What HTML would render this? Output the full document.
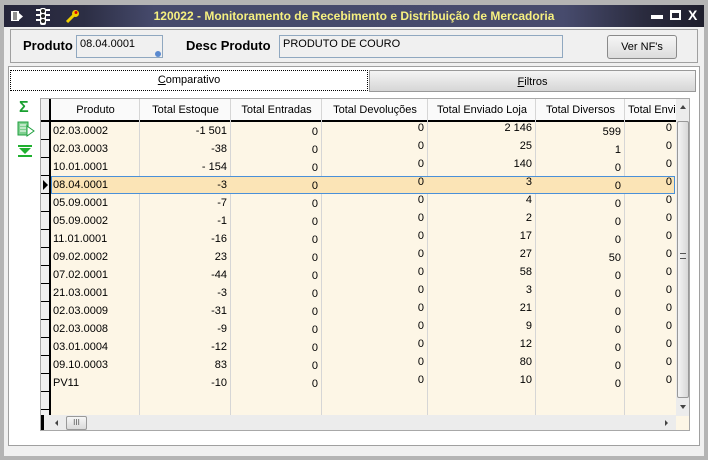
<!DOCTYPE html>
<html><head><meta charset="utf-8"><style>
*{margin:0;padding:0;box-sizing:border-box}
body{width:708px;height:460px;background:#b4b4b4;font-family:"Liberation Sans",sans-serif;font-size:11px;color:#000;position:relative;overflow:hidden}
.abs{position:absolute}
#win{left:4px;top:5px;width:700px;height:451px;background:#f0f0f0}
#title{left:4px;top:5px;width:700px;height:22px;background:linear-gradient(90deg,#25253a 0,#2c2e44 80px,#464a6c 150px,#474b6d 560px,#2a2b3e 640px,#1e1e2c 700px)}
#title .t{left:0;width:700px;top:4px;text-align:center;color:#f6f080;font-weight:bold;font-size:12px}
.tb{color:#fff;font-weight:bold;font-size:13px;top:2px}
#top{left:10px;top:29px;width:688px;height:34px;border:1px solid #a0a0a0;background:#f0f0f0}
.lbl{font-weight:bold;font-size:13px}
.inp{border:1px solid #90a8c0;background:#f0f0f0;font-size:11px;padding:2px 3px}
#btn{left:607px;top:35px;width:70px;height:24px;border:1px solid #8a8a8a;border-radius:3px;background:linear-gradient(#f6f6f6,#dcdcdc);text-align:center;line-height:22px}
#pane{left:8px;top:66px;width:692px;height:380px;background:#fff;border:1px solid #a0a0a0}
#tab1{left:10px;top:70px;width:358px;height:21px;border:1px dotted #000;text-align:center;line-height:18px;background:#fff}
#tab2{left:369px;top:70px;width:327px;height:22px;border:1px solid #999;background:linear-gradient(#f4f4f4,#d6d6d6);text-align:center;line-height:22px}
#grid{left:40px;top:98px;width:650px;height:333px;background:#fdf6e6;border:1px solid #a8a8a8;overflow:hidden}
.hdr{top:0;height:23px;background:#fafafa;border-bottom:2px solid #000;line-height:22px;text-align:center;white-space:nowrap;overflow:hidden}
.vl{top:0;width:1px;background:#d6d6d6}
.cell{height:18px;line-height:18px;text-align:right;padding-right:4px;white-space:nowrap}
</style></head><body>
<div class="abs" id="win"></div>
<div class="abs" id="title">
 <div class="abs t">120022 - Monitoramento de Recebimento e Distribuição de Mercadoria</div>
 <svg class="abs" style="left:6px;top:5px" width="14" height="13"><rect x="1" y="1" width="8" height="10" fill="#fff"/><path d="M3 3h4M3 5h4M3 7h4M3 9h4" stroke="#222"/><path d="M9 3l4 3.5-4 3.5z" fill="#fff"/></svg>
 <svg class="abs" style="left:32px;top:3px" width="14" height="17"><rect x="4" y="0" width="6" height="17" rx="2" fill="#fff"/><circle cx="7" cy="3" r="2" fill="#222"/><circle cx="7" cy="8" r="2" fill="#222"/><circle cx="7" cy="13" r="2" fill="#222"/><path d="M0 2h4M0 7h4M0 12h4M10 2h4M10 7h4M10 12h4" stroke="#fff" stroke-width="2"/></svg>
 <svg class="abs" style="left:61px;top:3px" width="16" height="16"><path d="M2 14l7-7" stroke="#f0d000" stroke-width="3"/><circle cx="10.5" cy="5.5" r="3.5" fill="#f0d000"/><circle cx="11" cy="4.5" r="1.5" fill="#d00"/></svg>
 <div class="abs" style="left:647px;top:10px;width:12px;height:4px;background:#fff"></div>
 <div class="abs" style="left:666px;top:5px;width:11px;height:10px;border:2px solid #fff;border-top-width:3px"></div>
 <div class="abs tb" style="left:684px;top:2px;font-size:14px">X</div>
</div>
<div class="abs" id="top"></div>
<div class="abs lbl" style="left:23px;top:38px">Produto</div>
<div class="abs inp" style="left:76px;top:35px;width:87px;height:23px">08.04.0001</div>
<div class="abs" style="left:155px;top:51px;width:6px;height:6px;border-radius:50%;background:#5a8ad0"></div>
<div class="abs lbl" style="left:186px;top:38px">Desc Produto</div>
<div class="abs inp" style="left:279px;top:35px;width:284px;height:23px">PRODUTO DE COURO</div>
<div class="abs" id="btn">Ver NF's</div>
<div class="abs" id="pane"></div>
<div class="abs" id="tab2"><u>F</u>iltros</div>
<div class="abs" id="tab1"><u>C</u>omparativo</div>
<div class="abs" style="left:19px;top:99px;color:#19a030;font-size:16px;font-weight:bold">Σ</div>
<svg class="abs" style="left:17px;top:121px" width="18" height="16"><rect x="1" y="1" width="10" height="13" fill="#7fd090" stroke="#20a040"/><path d="M3 4h6M3 7h6M3 10h6" stroke="#fff"/><path d="M10 5l7 5-7 5z" fill="#fff" stroke="#20a040"/></svg>
<svg class="abs" style="left:17px;top:144px" width="16" height="14"><rect x="1" y="1" width="14" height="2" fill="#20b030"/><path d="M2 4h12l-6 6z" fill="#20b030"/><rect x="1" y="11" width="14" height="2" fill="#20b030"/></svg>
<div class="abs" id="grid">
<div class="abs hdr" style="left:0;width:10px;background:#f0f0f0;border-right:2px solid #000"></div>
<div class="abs hdr" style="left:10px;width:89px">Produto</div>
<div class="abs hdr" style="left:99px;width:91px">Total Estoque</div>
<div class="abs hdr" style="left:190px;width:91px">Total Entradas</div>
<div class="abs hdr" style="left:281px;width:106px">Total Devoluções</div>
<div class="abs hdr" style="left:387px;width:108px">Total Enviado Loja</div>
<div class="abs hdr" style="left:495px;width:89px">Total Diversos</div>
<div class="abs hdr" style="left:584px;width:51px;text-align:left;padding-left:3px">Total Envi</div>
<div class="abs" style="left:0;top:23px;width:10px;height:294px;background:#f0f0f0;border-right:2px solid #000;background-image:repeating-linear-gradient(#f0f0f0 0,#f0f0f0 17px,#000 17px,#000 18px)"></div>
<div class="abs vl" style="left:98px;height:317px"></div>
<div class="abs vl" style="left:189px;height:317px"></div>
<div class="abs vl" style="left:280px;height:317px"></div>
<div class="abs vl" style="left:386px;height:317px"></div>
<div class="abs vl" style="left:494px;height:317px"></div>
<div class="abs vl" style="left:583px;height:317px"></div>
<div class="abs" style="left:10px;top:77px;width:624px;height:18px;background:#fbe4b6;border:1px solid #4a90d8"></div>
<div class="abs" style="left:2px;top:81px;width:0;height:0;border-left:5px solid #000;border-top:5px solid transparent;border-bottom:5px solid transparent"></div>
<div class="abs" style="left:12px;top:23px;width:86px">
<div class="cell" style="text-align:left">02.03.0002</div><div class="cell" style="text-align:left">02.03.0003</div><div class="cell" style="text-align:left">10.01.0001</div><div class="cell" style="text-align:left">08.04.0001</div><div class="cell" style="text-align:left">05.09.0001</div><div class="cell" style="text-align:left">05.09.0002</div><div class="cell" style="text-align:left">11.01.0001</div><div class="cell" style="text-align:left">09.02.0002</div><div class="cell" style="text-align:left">07.02.0001</div><div class="cell" style="text-align:left">21.03.0001</div><div class="cell" style="text-align:left">02.03.0009</div><div class="cell" style="text-align:left">02.03.0008</div><div class="cell" style="text-align:left">03.01.0004</div><div class="cell" style="text-align:left">09.10.0003</div><div class="cell" style="text-align:left">PV11</div></div>
<div class="abs" style="left:99px;top:23px;width:91px">
<div class="cell">-1 501</div><div class="cell">-38</div><div class="cell">- 154</div><div class="cell">-3</div><div class="cell">-7</div><div class="cell">-1</div><div class="cell">-16</div><div class="cell">23</div><div class="cell">-44</div><div class="cell">-3</div><div class="cell">-31</div><div class="cell">-9</div><div class="cell">-12</div><div class="cell">83</div><div class="cell">-10</div></div>
<div class="abs" style="left:190px;top:24px;width:91px">
<div class="cell">0</div><div class="cell">0</div><div class="cell">0</div><div class="cell">0</div><div class="cell">0</div><div class="cell">0</div><div class="cell">0</div><div class="cell">0</div><div class="cell">0</div><div class="cell">0</div><div class="cell">0</div><div class="cell">0</div><div class="cell">0</div><div class="cell">0</div><div class="cell">0</div></div>
<div class="abs" style="left:281px;top:20px;width:106px">
<div class="cell">0</div><div class="cell">0</div><div class="cell">0</div><div class="cell">0</div><div class="cell">0</div><div class="cell">0</div><div class="cell">0</div><div class="cell">0</div><div class="cell">0</div><div class="cell">0</div><div class="cell">0</div><div class="cell">0</div><div class="cell">0</div><div class="cell">0</div><div class="cell">0</div></div>
<div class="abs" style="left:387px;top:20px;width:108px">
<div class="cell">2 146</div><div class="cell">25</div><div class="cell">140</div><div class="cell">3</div><div class="cell">4</div><div class="cell">2</div><div class="cell">17</div><div class="cell">27</div><div class="cell">58</div><div class="cell">3</div><div class="cell">21</div><div class="cell">9</div><div class="cell">12</div><div class="cell">80</div><div class="cell">10</div></div>
<div class="abs" style="left:495px;top:24px;width:89px">
<div class="cell">599</div><div class="cell">1</div><div class="cell">0</div><div class="cell">0</div><div class="cell">0</div><div class="cell">0</div><div class="cell">0</div><div class="cell">50</div><div class="cell">0</div><div class="cell">0</div><div class="cell">0</div><div class="cell">0</div><div class="cell">0</div><div class="cell">0</div><div class="cell">0</div></div>
<div class="abs" style="left:584px;top:20px;width:51px">
<div class="cell">0</div><div class="cell">0</div><div class="cell">0</div><div class="cell">0</div><div class="cell">0</div><div class="cell">0</div><div class="cell">0</div><div class="cell">0</div><div class="cell">0</div><div class="cell">0</div><div class="cell">0</div><div class="cell">0</div><div class="cell">0</div><div class="cell">0</div><div class="cell">0</div></div>
<div class="abs" style="left:635px;top:0;width:14px;height:317px;background:#ececec"></div>
<div class="abs" style="left:639px;top:6px;width:0;height:0;border-bottom:4px solid #444;border-left:3px solid transparent;border-right:3px solid transparent"></div>
<div class="abs" style="left:636px;top:22px;width:12px;height:277px;border:1px solid #999;border-radius:2px;background:linear-gradient(90deg,#f4f4f4,#d8d8d8)"></div>
<div class="abs" style="left:639px;top:154px;width:6px;height:6px;border-top:1px solid #555;border-bottom:1px solid #555"></div>
<div class="abs" style="left:639px;top:306px;width:0;height:0;border-top:4px solid #444;border-left:3px solid transparent;border-right:3px solid transparent"></div>
<div class="abs" style="left:0;top:316px;width:3px;height:16px;background:#000"></div>
<div class="abs" style="left:3px;top:316px;width:632px;height:16px;background:#ececec"></div>
<div class="abs" style="left:14px;top:321px;width:0;height:0;border-right:3px solid #444;border-top:3px solid transparent;border-bottom:3px solid transparent"></div>
<div class="abs" style="left:25px;top:317px;width:21px;height:14px;border:1px solid #999;border-radius:2px;background:linear-gradient(#f6f6f6,#dadada);font-size:8px;text-align:center;line-height:12px;color:#555">III</div>
<div class="abs" style="left:624px;top:321px;width:0;height:0;border-left:3px solid #444;border-top:3px solid transparent;border-bottom:3px solid transparent"></div>
</div>
</body></html>
